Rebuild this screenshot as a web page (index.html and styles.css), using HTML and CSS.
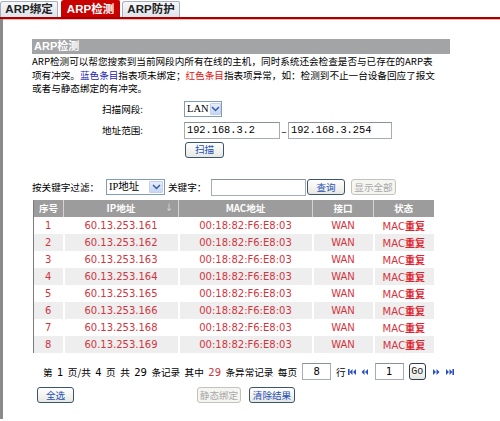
FILE: index.html
```html
<!DOCTYPE html>
<html>
<head>
<meta charset="utf-8">
<link rel="stylesheet" href="styles.css">
</head>
<body>
<div class="tabs">
  <div class="tab t1">ARP绑定</div>
  <div class="tab t2 active">ARP检测</div>
  <div class="tab t3">ARP防护</div>
</div>
<div class="main">
  <div class="title">ARP检测</div>
  <p class="desc">ARP检测可以帮您搜索到当前网段内所有在线的主机，同时系统还会检查是否与已存在的ARP表<br>项有冲突。<span class="blue">蓝色条目</span>指表项未绑定；<span class="red">红色条目</span>指表项异常，如：检测到不止一台设备回应了报文<br>或者与静态绑定的有冲突。</p>

  <div class="form">
    <div class="frow r1">
      <span class="flabel">扫描网段:</span>
      <div class="select sel-lan"><span class="sv">LAN</span><span class="arr"><svg width="9" height="6" viewBox="0 0 9 6"><path d="M1 1 L4.5 4.5 L8 1" fill="none" stroke="#3a5aa8" stroke-width="1.5"/></svg></span></div>
    </div>
    <div class="frow r2">
      <span class="flabel">地址范围:</span>
      <div class="input ip1">192.168.3.2</div>
      <span class="dash">–</span>
      <div class="input ip2">192.168.3.254</div>
    </div>
    <div class="frow r3">
      <span class="flabel"></span>
      <button class="btn scan">扫描</button>
    </div>
  </div>

  <div class="filter">
    <span class="flt-label">按关键字过滤：</span>
    <div class="select sel-ip"><span class="sv">IP地址</span><span class="arr"><svg width="9" height="6" viewBox="0 0 9 6"><path d="M1 1 L4.5 4.5 L8 1" fill="none" stroke="#3a5aa8" stroke-width="1.5"/></svg></span></div>
    <span class="kw-label">关键字：</span>
    <div class="input kw"></div>
    <button class="btn query">查询</button>
    <button class="btn disabled showall">显示全部</button>
  </div>

  <table class="grid">
    <colgroup><col class="c1"><col class="c2"><col class="c3"><col class="c4"><col class="c5"></colgroup>
    <thead>
      <tr><th>序号</th><th class="sortable">IP地址<span class="sort">↓</span></th><th>MAC地址</th><th>接口</th><th>状态</th></tr>
    </thead>
    <tbody>
      <tr><td>1</td><td>60.13.253.161</td><td>00:18:82:F6:E8:03</td><td>WAN</td><td>MAC<b>重复</b></td></tr>
      <tr><td>2</td><td>60.13.253.162</td><td>00:18:82:F6:E8:03</td><td>WAN</td><td>MAC<b>重复</b></td></tr>
      <tr><td>3</td><td>60.13.253.163</td><td>00:18:82:F6:E8:03</td><td>WAN</td><td>MAC<b>重复</b></td></tr>
      <tr><td>4</td><td>60.13.253.164</td><td>00:18:82:F6:E8:03</td><td>WAN</td><td>MAC<b>重复</b></td></tr>
      <tr><td>5</td><td>60.13.253.165</td><td>00:18:82:F6:E8:03</td><td>WAN</td><td>MAC<b>重复</b></td></tr>
      <tr><td>6</td><td>60.13.253.166</td><td>00:18:82:F6:E8:03</td><td>WAN</td><td>MAC<b>重复</b></td></tr>
      <tr><td>7</td><td>60.13.253.168</td><td>00:18:82:F6:E8:03</td><td>WAN</td><td>MAC<b>重复</b></td></tr>
      <tr><td>8</td><td>60.13.253.169</td><td>00:18:82:F6:E8:03</td><td>WAN</td><td>MAC<b>重复</b></td></tr>
    </tbody>
  </table>

  <div class="pager">
    <span class="ptext">第 <span class="n">1</span> 页/共 <span class="n">4</span> 页 共 <span class="n">29</span> 条记录 其中 <span class="n red2">29</span> 条异常记录 每页</span>
    <div class="input pin per">8</div>
    <span class="hang">行</span>
    <svg class="pic first" width="8" height="8" viewBox="0 0 8 8"><rect x="0" y="1" width="1.6" height="6" fill="#2a50c0"/><path d="M4.5 1 L1.6 4 L4.5 7Z M8 1 L5 4 L8 7Z" fill="#2a50c0"/></svg>
    <svg class="pic prev" width="7" height="8" viewBox="0 0 7 8"><path d="M3.5 1 L0.5 4 L3.5 7Z M7 1 L4 4 L7 7Z" fill="#2a50c0"/></svg>
    <div class="input pin page">1</div>
    <button class="go">Go</button>
    <svg class="pic next" width="7" height="8" viewBox="0 0 7 8"><path d="M0 1 L3 4 L0 7Z M3.5 1 L6.5 4 L3.5 7Z" fill="#2a50c0"/></svg>
    <svg class="pic last" width="8" height="8" viewBox="0 0 8 8"><path d="M0 1 L3 4 L0 7Z M3.5 1 L6.4 4 L3.5 7Z" fill="#2a50c0"/><rect x="6.4" y="1" width="1.6" height="6" fill="#2a50c0"/></svg>
  </div>

  <div class="actions">
    <button class="btn selall">全选</button>
    <button class="btn disabled bind">静态绑定</button>
    <button class="btn clear">清除结果</button>
  </div>
</div>
</body>
</html>
```
FILE: styles.css
```css
* { box-sizing: border-box; }
body {
  margin: 0;
  width: 500px;
  height: 421px;
  overflow: hidden;
  background: #fff;
  color: #000;
  font-family: "Noto Sans CJK SC", sans-serif;
  font-size: 9.6px;
}

/* tabs */
.tabs {
  display: flex;
  align-items: flex-end;
  height: 19px;
  border-bottom: 2px solid #a80000;
  box-shadow: 0 1px 0 #f2b4b4;
}
.tab {
  height: 16px;
  line-height: 15px;
  text-align: center;
  font-family: "Liberation Sans", "Noto Sans CJK SC", sans-serif;
  font-weight: bold;
  font-size: 11.5px;
  color: #222;
  background: linear-gradient(#f6f7fa, #dfe3ea);
  border: 1px solid #a7aeb8;
  border-bottom: none;
  border-radius: 3px 2px 0 0;
}
.t1 { width: 58px; margin-right: 3px; }
.t2 { width: 59px; margin-right: 2px; }
.t3 { width: 58px; }
.tab.active {
  height: 17px;
  line-height: 17px;
  background: #c80000;
  border-color: #c80000;
  color: #fff;
}

/* main area */
.main {
  height: 400px;
  border-left: 3px solid #8a8a8a;
  padding: 20px 0 0 29px;
}
.title {
  width: 418px;
  height: 15px;
  line-height: 15px;
  padding-left: 2px;
  background: #a2a4a6;
  color: #fff;
  font-family: "Liberation Sans", "Noto Sans CJK SC", sans-serif;
  font-weight: bold;
  font-size: 11px;
}
.desc {
  margin: 1px 0 0;
  line-height: 13.5px;
  white-space: nowrap;
}
.blue { color: #1c22b0; }
.red { color: #e01010; }

/* form */
.form { padding-left: 70px; margin-top: 5px; }
.frow { display: flex; align-items: center; }
.r1 { height: 16px; }
.r2 { height: 17px; margin-top: 5px; }
.r3 { height: 16px; margin-top: 3px; }
.flabel { width: 82px; }

.select {
  display: flex;
  align-items: stretch;
  height: 16px;
  border: 1px solid #7f9db9;
  background: #fff;
}
.select .sv {
  flex: 1;
  padding-left: 2px;
  line-height: 14px;
  font-family: "Liberation Serif", "Noto Sans CJK SC", serif;
  font-size: 10.5px;
}
.select .arr {
  width: 14px;
  margin: 1px;
  display: flex;
  align-items: center;
  justify-content: center;
  background: linear-gradient(#e6eefc, #c6d6f4);
  border: 1px solid #c2d0ec;
  border-radius: 1px;
}
.sel-lan { width: 38px; }
.sel-ip { width: 59px; margin-left: 6px; }

.input {
  height: 17px;
  border: 1px solid #a5acb5;
  border-top-color: #8a919a;
  background: #fff;
  padding-left: 2px;
  line-height: 15px;
  font-family: "Liberation Mono", monospace;
  font-size: 10.3px;
}
.ip1 { width: 96px; }
.dash { width: 8px; text-align: center; font-size: 10px; }
.ip2 { width: 104px; }

.btn {
  height: 16px;
  padding: 0;
  border: 1px solid #3c5472;
  border-radius: 3px;
  background: linear-gradient(#ffffff, #e8e8e2);
  color: #1f50b8;
  font-family: "Noto Sans CJK SC", sans-serif;
  font-size: 9.6px;
  line-height: 13px;
  text-align: center;
}
.btn.disabled {
  color: #a9a9a9;
  border-color: #c3c3bb;
  background: #f5f5f1;
}
.scan { width: 39px; margin-left: 1px; }

/* filter row */
.filter {
  display: flex;
  align-items: center;
  height: 17px;
  margin-top: 21px;
}
.flt-label { width: 68px; }
.kw-label { margin-left: 3px; width: 43px; }
.kw { width: 95px; }
.query { width: 38px; margin-left: 1px; }
.showall { width: 45px; margin-left: 6px; }

/* table */
.grid {
  margin-top: 4px;
  margin-left: 1px;
  width: 400px;
  border-collapse: collapse;
  border-left: 1px solid #7c7c7c;
  table-layout: fixed;
}
.c1 { width: 30px; }
.c2 { width: 115px; }
.c3 { width: 134px; }
.c4 { width: 61px; }
.c5 { width: 60px; }
.grid th {
  height: 17px;
  padding: 0;
  background: #9c9c9c;
  color: #fff;
  font-weight: bold;
  font-size: 9.6px;
  border-right: 1px solid #d4d4d4;
  text-align: center;
}
.grid th:last-child, .grid td:last-child { border-right: none; }
.sortable { position: relative; }
.sort {
  position: absolute;
  right: 5px;
  top: 1px;
  font-size: 8px;
  font-weight: normal;
  color: #e4e4e4;
}
.grid td {
  height: 17.1px;
  padding: 0;
  text-align: center;
  color: #d2343e;
  font-family: "DejaVu Sans", "Noto Sans CJK SC", sans-serif;
  font-size: 10px;
  border-right: 2px solid #fff;
}
.grid td b { font-family: "Noto Sans CJK SC", sans-serif; font-weight: bold; color: #e0222c; font-size: 10px; }
.grid tbody tr:nth-child(even) td { background: #eeeeee; }

/* pager */
.pager {
  display: flex;
  align-items: center;
  height: 17px;
  margin-top: 10px;
  padding-left: 11px;
}
.ptext { white-space: pre; word-spacing: 2.3px; }
.n { font-family: "DejaVu Sans", sans-serif; font-size: 10px; }
.red2 { color: #d2343e; }
.pin {
  width: 29px;
  text-align: center;
  padding: 0;
  font-family: "DejaVu Sans", sans-serif;
  font-size: 10px;
}
.per { margin-left: 5px; }
.hang { margin-left: 5px; }
.first { margin-left: 2px; }
.prev { margin-left: 5px; }
.page { margin-left: 7px; }
.go {
  width: 17px;
  height: 17px;
  margin-left: 5px;
  padding: 0;
  border: 1px solid #2e3d52;
  border-radius: 3px;
  background: linear-gradient(#ffffff, #e8e8e2);
  font-family: "Liberation Mono", monospace;
  font-size: 10px;
  color: #222;
}
.next { margin-left: 7px; }
.last { margin-left: 6px; }

/* actions */
.actions {
  display: flex;
  align-items: center;
  margin-top: 7px;
}
.selall { width: 37px; margin-left: 5px; }
.bind { width: 44px; margin-left: 123px; }
.clear { width: 46px; margin-left: 8px; }
```
